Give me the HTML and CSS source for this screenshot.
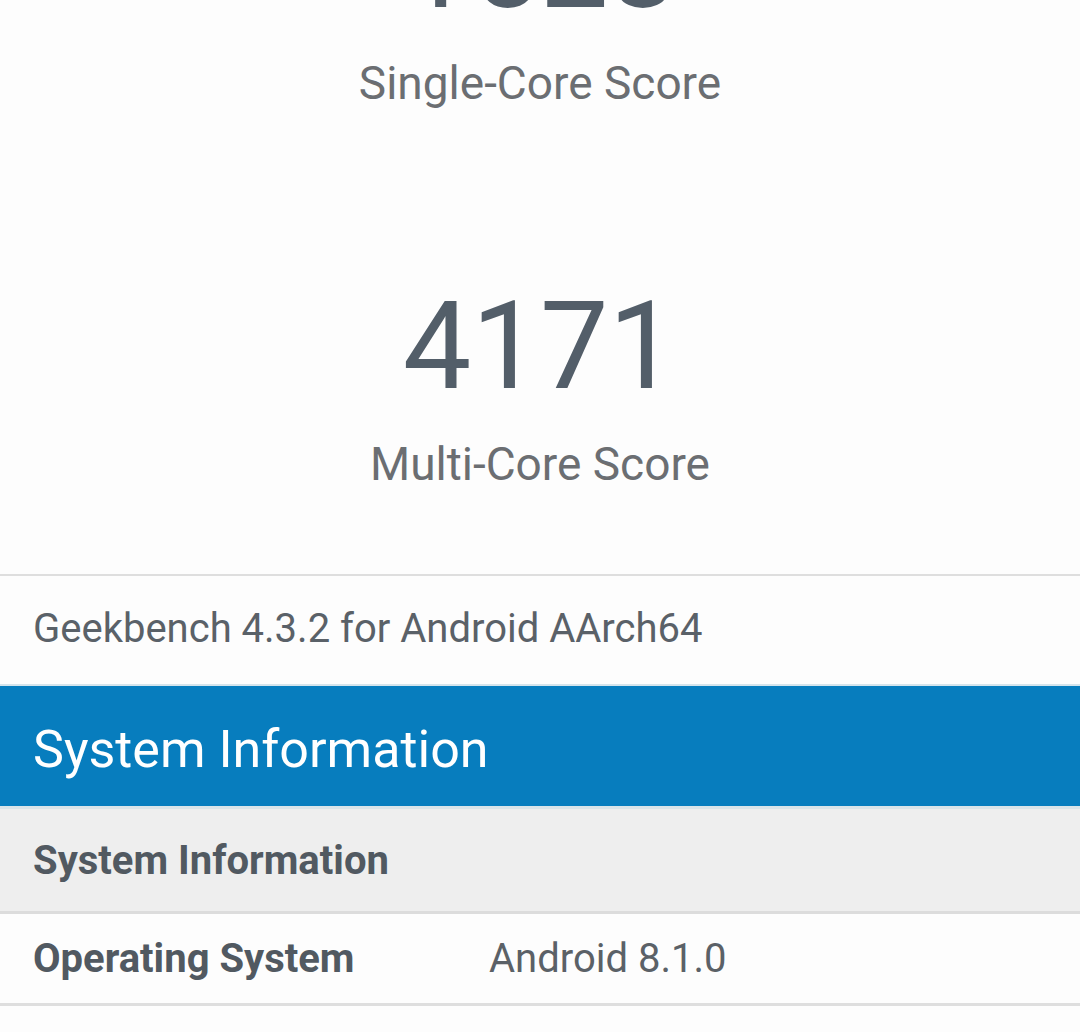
FILE: index.html
```html
<!DOCTYPE html>
<html lang="en">
<head>
  <meta charset="UTF-8" />
  <meta name="viewport" content="width=device-width, initial-scale=1.0"/>
  <title>Geekbench Result</title>
  <link rel="stylesheet" href="styles.css">
</head>
<body>
  <div class="scores">
    <div class="score">
      <div class="score-value">1528</div>
      <div class="score-label">Single-Core Score</div>
    </div>
    <div class="score">
      <div class="score-value">4171</div>
      <div class="score-label">Multi-Core Score</div>
    </div>
  </div>

  <div class="version">Geekbench 4.3.2 for Android AArch64</div>

  <div class="section-header">System Information</div>

  <table class="info-table">
    <tr class="group-row">
      <th colspan="2">System Information</th>
    </tr>
    <tr>
      <td class="key">Operating System</td>
      <td class="val">Android 8.1.0</td>
    </tr>
  </table>
</body>
</html>
```

FILE: styles.css
```css
body {
  font-family: Roboto, "Noto Sans", sans-serif;
  background-color: #fdfdfd;
  margin: 0;
  overflow: hidden;
}
.scores {
  margin-top: -104px;
  text-align: center;
  padding-bottom: 80px;
  border-bottom: 2px solid #dedede;
}
.score {
  margin-bottom: 164px;
}
.score:last-child {
  margin-bottom: 0;
}
.score-value {
  font-size: 122px;
  line-height: 140px;
  color: #535e69;
}
.score-label {
  font-size: 46px;
  line-height: 60px;
  color: #6b6e72;
  margin-top: 17px;
}
.version {
  font-size: 40px;
  color: #5a6168;
  padding: 0 33px;
  height: 108px;
  line-height: 106px;
  border-bottom: 2px solid #d4e4ec;
}
.section-header {
  background-color: #077dbe;
  color: #fff;
  font-size: 52px;
  padding: 0 33px;
  height: 120px;
  line-height: 128px;
  border-bottom: 3px solid #d9e4e9;
}
.info-table {
  width: 100%;
  border-collapse: collapse;
  font-size: 40px;
  color: #515961;
}
.info-table th,
.info-table td {
  text-align: left;
  padding: 0 0 0 33px;
}
.group-row th {
  background-color: #eeeeee;
  font-weight: 700;
  height: 102px;
  border-bottom: 3px solid #dcdcdc;
}
.info-table td {
  height: 89px;
  border-bottom: 3px solid #dedede;
}
.key {
  font-weight: 700;
  width: 423px;
}
.val {
  color: #5b6167;
}
```
